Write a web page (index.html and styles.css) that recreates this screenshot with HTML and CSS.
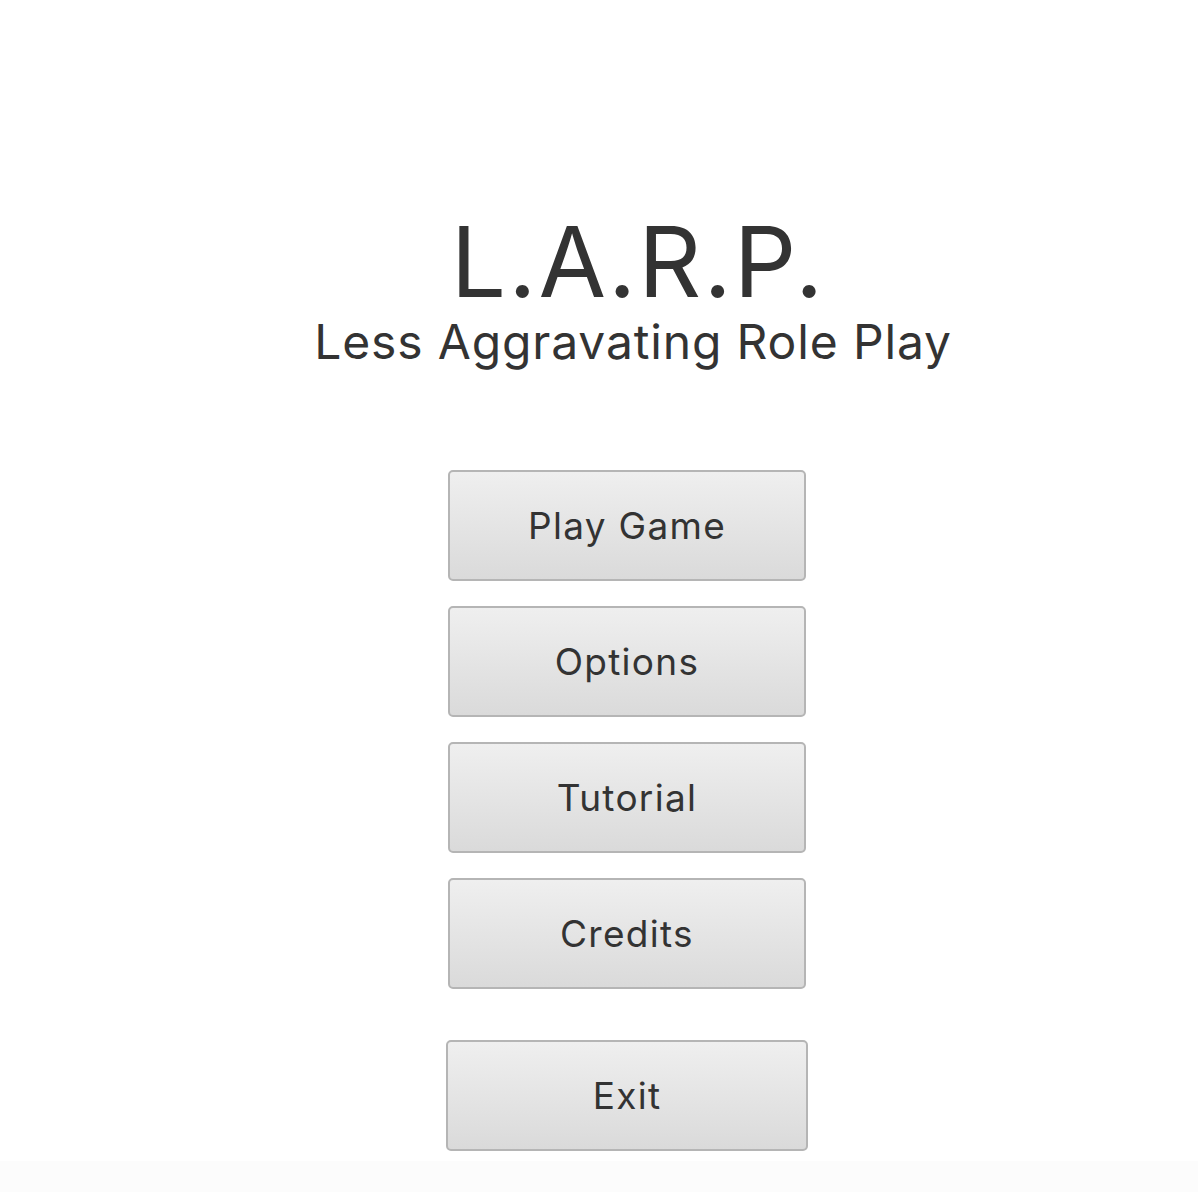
FILE: index.html
```html
<!DOCTYPE html>
<html>
<head>
<meta charset="utf-8">
<link rel="stylesheet" href="styles.css">
</head>
<body>
<main class="screen">
  <header class="brand">
    <h1 class="title">L.A.R.P.</h1>
    <p class="subtitle">Less Aggravating Role Play</p>
  </header>
  <nav class="menu">
    <button class="btn">Play Game</button>
    <button class="btn">Options</button>
    <button class="btn">Tutorial</button>
    <button class="btn">Credits</button>
    <button class="btn btn-exit">Exit</button>
  </nav>
</main>
<footer class="strip"></footer>
</body>
</html>
```
FILE: styles.css
```css
html, body {
  margin: 0;
  padding: 0;
  background: #ffffff;
}
body {
  font-family: Inter, "Noto Sans", sans-serif;
  color: #333333;
  width: 1198px;
  height: 1192px;
  overflow: hidden;
}
.screen {
  height: 1161px;
  display: flex;
  flex-direction: column;
  align-items: center;
  padding-left: 56px;
  box-sizing: border-box;
}
.brand {
  display: flex;
  flex-direction: column;
  align-items: center;
  margin-top: 212px;
}
.title {
  margin: 0 0 0 22px;
  font-size: 98px;
  font-weight: 400;
  line-height: 100px;
  letter-spacing: 2px;
}
.subtitle {
  margin: 2px 0 0 12px;
  font-size: 48px;
  line-height: 56px;
  letter-spacing: 0.85px;
}
.menu {
  display: flex;
  flex-direction: column;
  align-items: center;
  gap: 25px;
  margin-top: 100px;
}
.btn {
  width: 358px;
  height: 111px;
  box-sizing: border-box;
  border: 2px solid #b5b5b5;
  border-radius: 5px;
  background: linear-gradient(#efefef, #dadada);
  font-family: Inter, "Noto Sans", sans-serif;
  font-size: 37px;
  letter-spacing: 1.3px;
  color: #333333;
  padding: 0;
}
.btn-exit {
  width: 362px;
  margin-top: 26px;
}
.strip {
  height: 31px;
  background: #fcfcfc;
}
```
